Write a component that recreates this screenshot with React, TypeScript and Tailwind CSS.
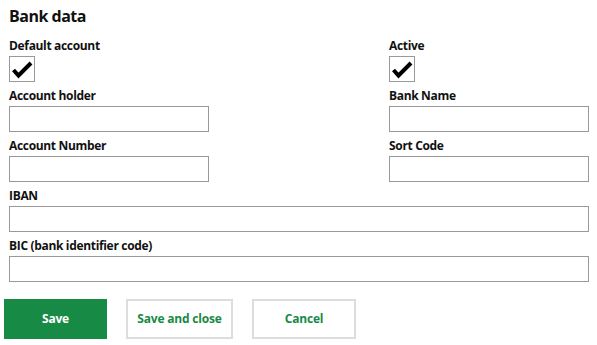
import React from "react";

const font = { fontFamily: '"Open Sans", "Noto Sans", sans-serif' };

function Check() {
  return (
    <div className="w-[26px] h-[26px] border border-[#999] bg-white flex items-center justify-center">
      <svg width="24" height="24" viewBox="0 0 24 24">
        <path d="M3.5 13 L8.5 18.5 L21 6" fill="none" stroke="#000" strokeWidth="4" strokeLinejoin="miter" strokeLinecap="butt" />
      </svg>
    </div>
  );
}

function Field({ label, wide }: { label: string; wide?: boolean }) {
  return (
    <div className={wide ? "col-span-2" : ""}>
      <div className="text-[12px] leading-[16px] font-bold text-[#111] mb-[2px] tracking-[-0.33px]">{label}</div>
      <div className={(wide ? "w-[580px]" : "w-[200px]") + " h-[26px] border border-[#999] bg-white"} />
    </div>
  );
}

function CheckField({ label }: { label: string }) {
  return (
    <div>
      <div className="text-[12px] leading-[16px] font-bold text-[#111] mb-[2px] tracking-[-0.33px]">{label}</div>
      <Check />
    </div>
  );
}

export default function App() {
  return (
    <div className="w-[597px] h-[345px] bg-white" style={font}>
      <div className="pl-[9px] pt-[4px]">
        <h1 className="text-[16px] leading-[24px] font-bold text-[#111] mb-[10px] tracking-[-0.5px]">Bank data</h1>
        <div className="grid grid-cols-[380px_200px] gap-y-[6px]">
          <CheckField label="Default account" />
          <CheckField label="Active" />
          <Field label="Account holder" />
          <Field label="Bank Name" />
          <Field label="Account Number" />
          <Field label="Sort Code" />
          <Field label="IBAN" wide />
          <Field label="BIC (bank identifier code)" wide />
        </div>
      </div>
      <div className="flex pl-[4px] mt-[17px] gap-[19px]">
        <button className="w-[103px] h-[40px] bg-[#178a45] text-white text-[12px] font-bold tracking-[-0.2px]">Save</button>
        <button className="w-[107px] h-[40px] border-2 border-[#ddd] bg-white text-[#178a45] text-[12px] font-bold tracking-[-0.2px]">Save and close</button>
        <button className="w-[104px] h-[40px] border-2 border-[#ddd] bg-white text-[#178a45] text-[12px] font-bold tracking-[-0.2px]">Cancel</button>
      </div>
    </div>
  );
}
